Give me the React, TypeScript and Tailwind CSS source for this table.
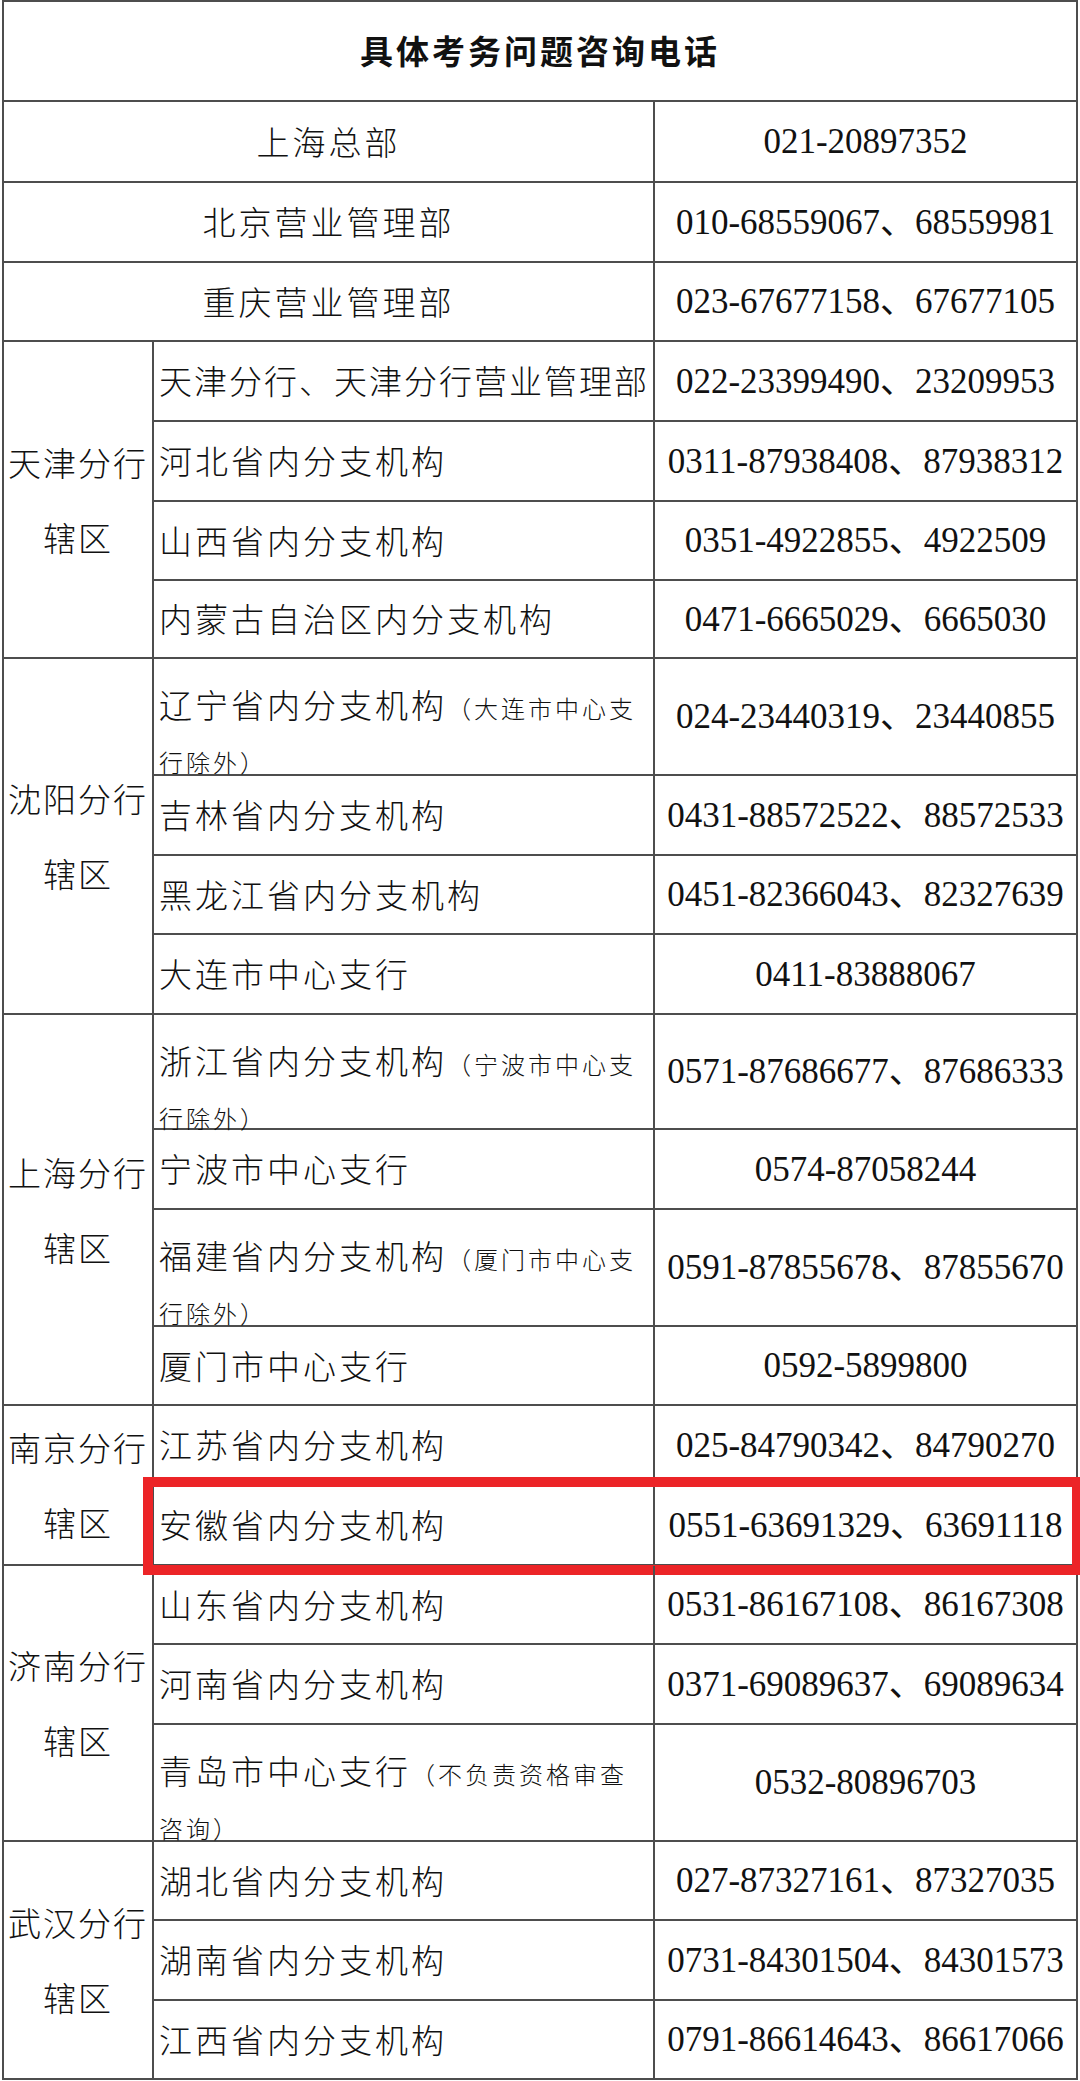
import React from "react";

type Row = {
  name: string;
  note?: [string, string];
  phone: string;
  h: string;
  tight?: boolean;
  mark?: boolean;
};

type Group = { label: [string, string]; rows: Row[] };

const cjk = "font-['Noto_Sans_CJK_SC',sans-serif]";
const serif = "font-['Liberation_Serif','Noto_Sans_CJK_SC',serif]";

const topRows: Row[] = [
  { name: "上海总部", phone: "021-20897352", h: "h-[81px]" },
  { name: "北京营业管理部", phone: "010-68559067、68559981", h: "h-[80px]" },
  { name: "重庆营业管理部", phone: "023-67677158、67677105", h: "h-[79px]" },
];

const groups: Group[] = [
  {
    label: ["天津分行", "辖区"],
    rows: [
      { name: "天津分行、天津分行营业管理部", phone: "022-23399490、23209953", h: "h-[80px]", tight: true },
      { name: "河北省内分支机构", phone: "0311-87938408、87938312", h: "h-[80px]" },
      { name: "山西省内分支机构", phone: "0351-4922855、4922509", h: "h-[79px]" },
      { name: "内蒙古自治区内分支机构", phone: "0471-6665029、6665030", h: "h-[78px]" },
    ],
  },
  {
    label: ["沈阳分行", "辖区"],
    rows: [
      { name: "辽宁省内分支机构", note: ["（大连市中心支", "行除外）"], phone: "024-23440319、23440855", h: "h-[117px]" },
      { name: "吉林省内分支机构", phone: "0431-88572522、88572533", h: "h-[80px]" },
      { name: "黑龙江省内分支机构", phone: "0451-82366043、82327639", h: "h-[79px]" },
      { name: "大连市中心支行", phone: "0411-83888067", h: "h-[80px]" },
    ],
  },
  {
    label: ["上海分行", "辖区"],
    rows: [
      { name: "浙江省内分支机构", note: ["（宁波市中心支", "行除外）"], phone: "0571-87686677、87686333", h: "h-[115px]" },
      { name: "宁波市中心支行", phone: "0574-87058244", h: "h-[80px]" },
      { name: "福建省内分支机构", note: ["（厦门市中心支", "行除外）"], phone: "0591-87855678、87855670", h: "h-[117px]" },
      { name: "厦门市中心支行", phone: "0592-5899800", h: "h-[79px]" },
    ],
  },
  {
    label: ["南京分行", "辖区"],
    rows: [
      { name: "江苏省内分支机构", phone: "025-84790342、84790270", h: "h-[80px]" },
      { name: "安徽省内分支机构", phone: "0551-63691329、63691118", h: "h-[80px]", mark: true },
    ],
  },
  {
    label: ["济南分行", "辖区"],
    rows: [
      { name: "山东省内分支机构", phone: "0531-86167108、86167308", h: "h-[79px]" },
      { name: "河南省内分支机构", phone: "0371-69089637、69089634", h: "h-[80px]" },
      { name: "青岛市中心支行", note: ["（不负责资格审查", "咨询）"], phone: "0532-80896703", h: "h-[117px]" },
    ],
  },
  {
    label: ["武汉分行", "辖区"],
    rows: [
      { name: "湖北省内分支机构", phone: "027-87327161、87327035", h: "h-[79px]" },
      { name: "湖南省内分支机构", phone: "0731-84301504、84301573", h: "h-[80px]" },
      { name: "江西省内分支机构", phone: "0791-86614643、86617066", h: "h-[79px]" },
    ],
  },
];

function Phone({ value }: { value: string }) {
  return (
    <div className={`flex flex-1 items-center justify-center whitespace-nowrap text-[35px] leading-none text-[#111] ${serif}`}>
      {value}
    </div>
  );
}

function Name({ row }: { row: Row }) {
  if (row.note) {
    return (
      <div className={`w-[501px] shrink-0 self-stretch whitespace-nowrap border-r-2 border-[#4d4d4d] pl-[5px] pt-[20px] text-[33px] leading-[50px] tracking-[3px] ${cjk} font-light`}>
        {row.name}
        <span className="text-[24px]">{row.note[0]}</span>
        <br />
        <span className="text-[24px]">{row.note[1]}</span>
      </div>
    );
  }
  return (
    <div
      className={`flex w-[501px] shrink-0 items-center self-stretch whitespace-nowrap border-r-2 border-[#4d4d4d] pl-[5px] text-[33px] ${row.tight ? "tracking-[2px]" : "tracking-[3px]"} ${cjk} font-light`}
    >
      {row.name}
    </div>
  );
}

export default function App() {
  return (
    <div className="min-h-[2081px] w-[1080px] bg-white text-[#111]">
      <div className="ml-[2px] w-[1076px] border-x-2 border-t-2 border-[#4d4d4d]">
        <div className={`flex h-[100px] items-center justify-center border-b-2 border-[#4d4d4d] text-[33px] font-bold tracking-[3px] ${cjk}`}>
          具体考务问题咨询电话
        </div>

        {topRows.map((row) => (
          <div key={row.name} className={`flex ${row.h} border-b-2 border-[#4d4d4d]`}>
            <div className={`flex w-[651px] shrink-0 items-center justify-center border-r-2 border-[#4d4d4d] text-[33px] tracking-[3px] ${cjk} font-light`}>
              {row.name}
            </div>
            <Phone value={row.phone} />
          </div>
        ))}

        {groups.map((group) => (
          <div key={group.label[0]} className="flex">
            <div className={`flex w-[150px] shrink-0 flex-col items-center justify-center border-r-2 border-b-2 border-[#4d4d4d] text-[33px] leading-[75px] ${cjk} font-light`}>
              <div className="tracking-[2px]">{group.label[0]}</div>
              <div className="tracking-[2px]">{group.label[1]}</div>
            </div>
            <div className="flex flex-1 flex-col">
              {group.rows.map((row) => (
                <div key={row.name} className={`relative flex ${row.h} border-b-2 border-[#4d4d4d]`}>
                  <Name row={row} />
                  <Phone value={row.phone} />
                  {row.mark && (
                    <div className="pointer-events-none absolute -top-[9px] -bottom-[11px] -left-[11px] -right-[6px] border-[10px] border-[#ec2427]" />
                  )}
                </div>
              ))}
            </div>
          </div>
        ))}
      </div>
    </div>
  );
}
